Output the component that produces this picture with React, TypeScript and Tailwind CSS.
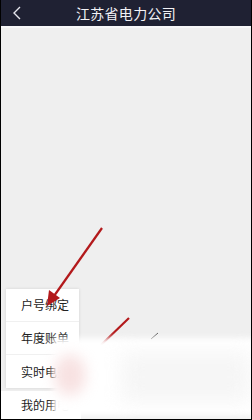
import React from "react";

const cjk = { fontFamily: '"Noto Sans CJK SC", "Noto Sans", sans-serif' };

const menuItems = ["户号绑定", "年度账单", "实时电费"];

export default function App() {
  return (
    <div
      className="relative flex h-[420px] w-[252px] flex-col overflow-hidden border-x border-b border-black bg-[#efefef]"
      style={cjk}
    >
      {/* Header */}
      <div className="flex h-[26px] shrink-0 items-center bg-[#1f2133] px-[11px] text-white">
        <svg width="10" height="14" viewBox="0 0 10 14" fill="none">
          <path d="M8 1 L2 7 L8 13" stroke="#e6e6ee" strokeWidth="1.4" />
        </svg>
        <span className="flex-1 pr-[10px] text-center text-[14px] leading-none tracking-[0.3px] text-[#f2f2f6]">
          江苏省电力公司
        </span>
      </div>
      <div className="h-[2px] shrink-0 bg-[#f7f7f9]" />

      {/* Body */}
      <div className="flex-1" />

      {/* Bottom tab bar */}
      <div className="flex h-[28px] shrink-0">
        <div className="flex w-[80px] items-center bg-white pl-[20px] text-[12px] text-[#222]">
          我的用电
        </div>
      </div>

      {/* Popup menu */}
      <div className="absolute left-[5px] top-[289px] flex w-[73px] flex-col divide-y divide-[#f0f0f0] bg-white shadow-[0_0_3px_rgba(0,0,0,0.12)]">
        {menuItems.map((t) => (
          <div key={t} className="flex h-[33px] items-center pl-[15px] text-[12px] text-[#222]">
            {t}
          </div>
        ))}
      </div>

      {/* Annotation arrows */}
      <svg className="absolute inset-0" width="252" height="420">
        <line x1="101" y1="228" x2="53" y2="296" stroke="#b3191b" strokeWidth="2.2" />
        <polygon points="46,306 48,290 59,298" fill="#b3191b" />
        <line x1="128" y1="318" x2="100" y2="345" stroke="#b3191b" strokeWidth="2.2" />
        <line x1="150" y1="339" x2="157" y2="333" stroke="#555" strokeWidth="1" />
      </svg>

      {/* Blurred watermark */}
      <div className="absolute left-[52px] top-[338px] h-[78px] w-[205px] bg-white blur-[3px]" />
      <div className="absolute left-[54px] top-[355px] h-[40px] w-[30px] rounded-full bg-[#f0c4c4] opacity-50 blur-[7px]" />
      <div className="absolute left-[120px] top-[352px] h-[50px] w-[130px] bg-[#f2f2f2] opacity-70 blur-[10px]" />
    </div>
  );
}
